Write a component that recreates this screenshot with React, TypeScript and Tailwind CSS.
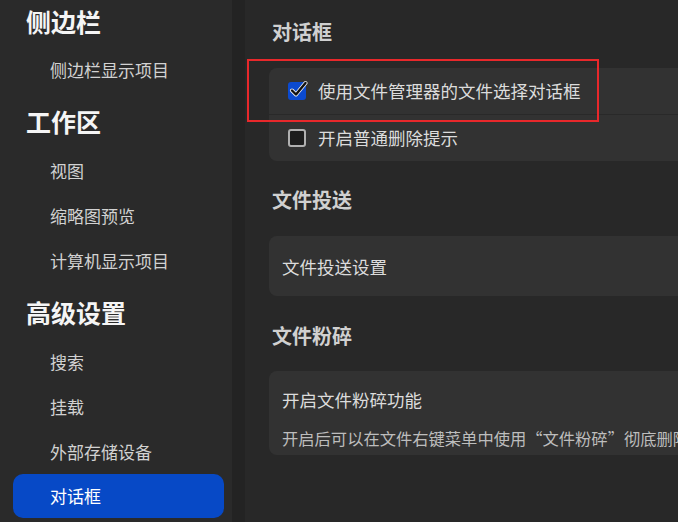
import React from "react";

const sections = [
  { title: "侧边栏", items: ["侧边栏显示项目"] },
  { title: "工作区", items: ["视图", "缩略图预览", "计算机显示项目"] },
  { title: "高级设置", items: ["搜索", "挂载", "外部存储设备", "对话框"] },
];

const Checkbox = ({ checked }: { checked: boolean }) =>
  checked ? (
    <span className="relative block w-[18px] h-[18px] rounded-[3px] bg-[#0b4ad0]">
      <svg className="absolute -top-[2px] left-[1px]" width="19" height="19" viewBox="0 0 19 19" fill="none">
        <path d="M3 10.5 L7 14.5 L16.5 3" stroke="#f2f2f2" strokeWidth="4" strokeLinecap="round" strokeLinejoin="round" />
        <path d="M3 10.5 L7 14.5 L16.5 3" stroke="#111111" strokeWidth="2.4" strokeLinecap="round" strokeLinejoin="round" />
      </svg>
    </span>
  ) : (
    <span className="block w-[18px] h-[18px] rounded-[3px] border-2 border-[#b0b0b0] bg-[#1d1d1d]" />
  );

export default function App() {
  return (
    <div className="flex w-[678px] h-[522px] overflow-hidden bg-[#282828] font-['Noto_Sans_CJK_SC',sans-serif]">
      {/* sidebar */}
      <div className="w-[232px] shrink-0 bg-[#2a2a2a]">
        {sections.map((s, i) => (
          <div key={s.title}>
            <div
              className={`pl-[26px] text-[25px] font-bold text-[#f5f5f5] ${
                i === 0 ? "h-[47px] leading-[42px]" : "h-[56px] leading-[58px]"
              }`}
            >
              {s.title}
            </div>
            {s.items.map((item) =>
              item === "对话框" ? (
                <div
                  key={item}
                  className="ml-[13px] mr-[8px] h-[44px] rounded-[10px] bg-[#0749c6] pl-[37px] flex items-center text-[17px] text-white"
                >
                  {item}
                </div>
              ) : (
                <div key={item} className="h-[45px] pl-[50px] flex items-center text-[17px] text-[#d2d2d2]">
                  {item}
                </div>
              )
            )}
          </div>
        ))}
      </div>
      <div className="w-[13px] shrink-0 bg-[#232323]" />

      {/* main */}
      <div className="relative flex-1 pl-[24px]">
        <div className="h-[68px] leading-[64px] pl-[3px] text-[20px] font-semibold text-[#d0d0d0]">对话框</div>
        <div className="w-[520px] rounded-[8px] bg-[#323232]">
          <div className="h-[46px] pl-[19px] flex items-center gap-[12px] text-[17.5px] text-[#dcdcdc]">
            <Checkbox checked />
            <span>使用文件管理器的文件选择对话框</span>
          </div>
          <div className="h-px bg-[#292929]" />
          <div className="h-[46px] pl-[19px] flex items-center gap-[12px] text-[17.5px] text-[#dcdcdc]">
            <Checkbox checked={false} />
            <span>开启普通删除提示</span>
          </div>
        </div>

        <div className="h-[75px] leading-[78px] pl-[3px] text-[20px] font-semibold text-[#d0d0d0]">文件投送</div>
        <div className="w-[520px] h-[60px] rounded-[8px] bg-[#323232] pl-[13px] pt-[3px] flex items-center text-[17.5px] text-[#dcdcdc]">
          文件投送设置
        </div>

        <div className="h-[75px] leading-[80px] pl-[3px] text-[20px] font-semibold text-[#d0d0d0]">文件粉碎</div>
        <div className="w-[520px] rounded-[8px] bg-[#323232] pl-[13px] pt-[17px] pb-[5px] whitespace-nowrap overflow-hidden">
          <div className="h-[24px] leading-[24px] text-[17.5px] text-[#dcdcdc]">开启文件粉碎功能</div>
          <div className="mt-[14px] h-[24px] leading-[24px] text-[16.3px] text-[#bdbdbd]">
            开启后可以在文件右键菜单中使用“文件粉碎”彻底删除文件，删除后的文件无法恢复
          </div>
        </div>

        {/* highlight */}
        <div className="absolute left-[2px] top-[59px] w-[352px] h-[63px] border-2 border-[#e8282b]" />
      </div>
    </div>
  );
}
